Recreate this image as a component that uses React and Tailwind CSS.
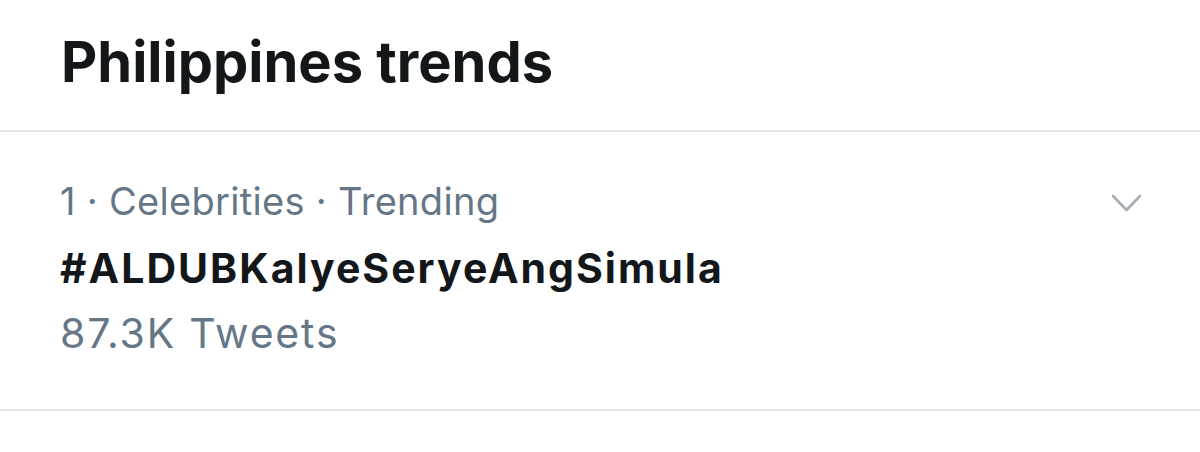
export default function App() {
  return (
    <div
      className="w-[1200px] h-[452px] bg-white overflow-hidden"
      style={{ fontFamily: 'Inter, "Noto Sans", sans-serif' }}
    >
      <div className="h-[130px] pl-[61px] pt-[30px]">
        <h1 className="text-[56px] leading-[64px] font-bold text-[#14171a]">
          Philippines trends
        </h1>
      </div>
      <div className="h-[2px] bg-[#e3e6e9]" />
      <div className="flex justify-between pl-[60px] pr-[58px] pt-[46px] pb-[52px]">
        <div className="flex flex-col">
          <div className="text-[38px] leading-[46px] tracking-[0.3px] text-[#657786]">
            1 · Celebrities · Trending
          </div>
          <div className="mt-[20px] text-[41px] leading-[48px] tracking-[2px] font-bold text-[#14171a]">
            #ALDUBKalyeSeryeAngSimula
          </div>
          <div className="mt-[17px] text-[41px] leading-[48px] tracking-[1.8px] text-[#657786]">
            87.3K Tweets
          </div>
        </div>
        <svg
          className="mt-[16px]"
          width="31"
          height="19"
          viewBox="0 0 31 19"
          fill="none"
        >
          <polyline
            points="2,2 15.5,16 29,2"
            stroke="#a3aeb8"
            strokeWidth="2.6"
            strokeLinecap="round"
            strokeLinejoin="round"
          />
        </svg>
      </div>
      <div className="h-[2px] bg-[#e3e6e9]" />
    </div>
  );
}
